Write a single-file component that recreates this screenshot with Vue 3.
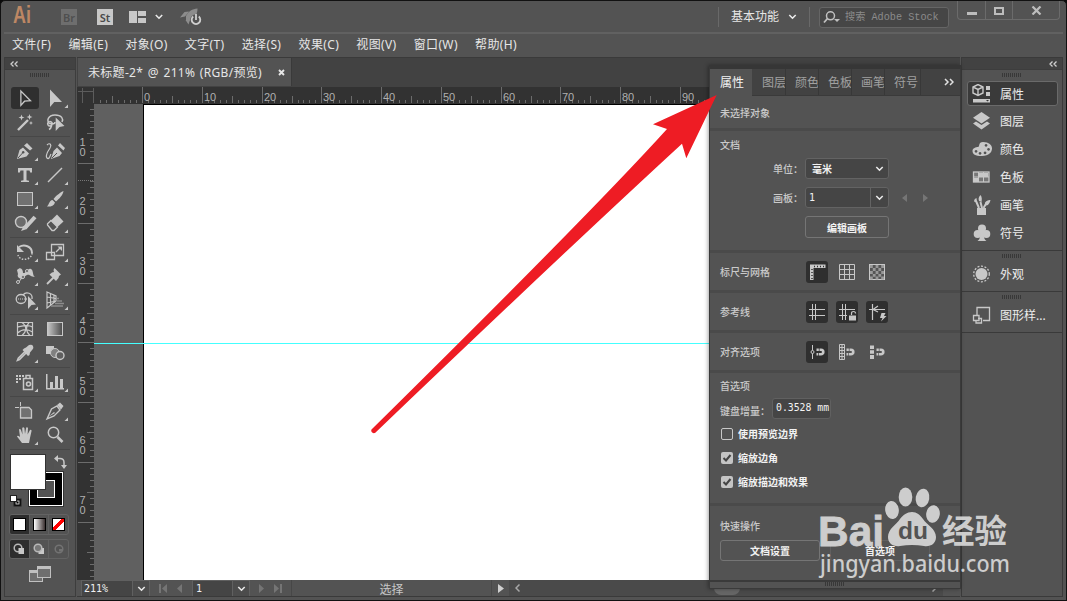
<template>
  <div class="window">
    <header class="app-bar">
      <svg class="logo" width="24" height="28">
        <text x="1" y="20" textLength="18" lengthAdjust="spacingAndGlyphs">Ai</text>
      </svg>
      <span class="app-badge dim">Br</span>
      <span class="app-badge">St</span>
      <svg class="layout-icon" width="17" height="12" viewBox="0 0 17 12">
        <path d="M0 0h8v12H0zM9 0h8v5H9zM9 7h8v5H9z" />
      </svg>
      <svg class="chev" width="8" height="6" viewBox="0 0 8 6"><path d="M.8 1 4 4.2 7.2 1" /></svg>
      <svg class="rocket" width="22" height="18" viewBox="0 0 22 18">
        <path d="M17.500.5C12 1 9 3 6 8v4l5 1c4-3 6.500-7 6.500-12.500zM9 3.500 4.500 4 0 9.500l5-1zM5.500 12l3 4.500L10 12z" fill="#8c8c8c" />
        <circle cx="16" cy="12" r="5.800" fill="#535353" />
        <path d="M13.200 8.500a4.300 4.300 0 1 0 5.600 0M16 6v6" fill="none" stroke="#cfcfcf" stroke-width="1.800" />
      </svg>

      <div class="app-right">
        <span class="v-line"></span>
        <span class="workspace-name">基本功能</span>
        <svg class="chev" width="9" height="6" viewBox="0 0 8 6"><path d="M.8 1 4 4.2 7.2 1" /></svg>
        <span class="v-line second"></span>
        <div class="search">
          <svg width="17" height="14" viewBox="0 0 17 14">
            <circle cx="7.500" cy="4.800" r="4" fill="none" stroke="#c0c0c0" stroke-width="1.500" />
            <path d="M4.500 7.500 1 11.500" stroke="#c0c0c0" stroke-width="1.800" />
            <path d="M11 8h6l-3 3z" fill="#c0c0c0" />
          </svg>
          <span>搜索 Adobe Stock</span>
        </div>
        <div class="win-buttons">
          <span class="win-min"><i></i></span>
          <span class="win-max"><i></i></span>
          <span class="win-close">
            <svg width="11" height="9" viewBox="0 0 11 9"><path d="M1.500.5l8 8M9.500.5l-8 8" stroke="#bdbdbd" stroke-width="2.200" /></svg>
          </span>
        </div>
      </div>
    </header>

    <nav class="menu-bar">
      <span v-for="item in menus" :key="item">{{ item }}</span>
    </nav>

    <div class="workspace">
      <aside class="toolbar">
        <div class="dock-head left"><svg width="8" height="6" viewBox="0 0 8 6"><path d="M3.500.5 1 3l2.500 2.500M7.500.5 5 3l2.500 2.500" /></svg></div>
        <div class="grip"></div>
        <div v-for="(group, g) in toolGroups" :key="g" class="tool-group">
          <span v-for="tool in group" :key="tool.name" class="tool" :class="{ active: tool.name === 'select' }">
            <svg width="30" height="24" viewBox="-15 -12 30 24">
              <g v-html="tool.art"></g>
              <path v-if="tool.more" d="M13 6.500v3.500H9.500z" />
            </svg>
          </span>
        </div>
        <div class="swatches">
          <svg width="60" height="60" viewBox="0 0 60 60">
            <rect x="18.500" y="22.500" width="35" height="35" fill="#000" stroke="#333" />
            <rect x="19.500" y="23.500" width="33" height="33" fill="#000" stroke="#fff" />
            <rect x="27.500" y="31.500" width="17" height="17" fill="#535353" stroke="#fff" />
            <rect x=".5" y="5.500" width="35" height="35" fill="#fff" stroke="#333" />
            <path d="M47 9.500h3q4 0 4 4v4" fill="none" stroke="#c8c8c8" stroke-width="1.500" />
            <path d="M44 9.500l4-3.500v7zM54 20l-3-4h6z" fill="#c8c8c8" />
            <rect x="4" y="50" width="7" height="7" fill="#000" stroke="#222" />
            <rect x="6" y="52" width="3" height="3" fill="none" stroke="#c8c8c8" />
            <rect x=".5" y="46.500" width="6" height="6" fill="#fff" stroke="#222" />
          </svg>
        </div>
        <div class="cell-row">
          <span class="cell on"><i class="paint white"></i></span>
          <span class="cell"><i class="paint grad"></i></span>
          <span class="cell"><i class="paint none"></i></span>
        </div>
        <div class="cell-row modes">
          <span class="cell on"><svg width="12" height="12" viewBox="0 0 12 12"><circle cx="5" cy="5" r="3.800" fill="none" stroke="#b8b8b8" stroke-width="1.500" /><path d="M5.500 5H11v6H5.500z" fill="#c8c8c8" /></svg></span>
          <span class="cell"><svg width="12" height="12" viewBox="0 0 12 12"><path d="M5.500 5H11v6H5.500z" fill="#c8c8c8" /><circle cx="5" cy="5" r="3.800" fill="#777" stroke="#b8b8b8" stroke-width="1.500" /></svg></span>
          <span class="cell"><svg width="12" height="12" viewBox="0 0 12 12"><circle cx="6" cy="6" r="3.800" fill="none" stroke="#737373" stroke-width="1.500" /><path d="M6 6h3v2.500H6z" fill="#737373" /></svg></span>
        </div>
        <svg class="screen-mode" width="22" height="16" viewBox="0 0 22 16">
          <rect x=".5" y="4.500" width="13" height="11" fill="#6f6f6f" stroke="#c0c0c0" />
          <path d="M0 4h14v3H0z" fill="#c0c0c0" />
          <rect x="8.500" y=".5" width="13" height="11" fill="#6f6f6f" stroke="#c0c0c0" />
          <path d="M8 0h14v3H8z" fill="#c0c0c0" />
        </svg>
      </aside>

      <main class="document">
        <div class="tab-bar">
          <div class="doc-tab">
            <span>未标题-2* @ 211% (RGB/预览)</span>
            <svg width="7" height="7" viewBox="0 0 7 7"><path d="M1 1l5 5M6 1 1 6" stroke="#e6e6e6" stroke-width="1.900" /></svg>
          </div>
        </div>
        <svg class="ruler-top" width="883" height="17" viewBox="77 87 883 17">
          <path d="M82.500 88v15M78 91.500h15M93.500 88v15" stroke="#5c5c5c" />
          <path :d="topTicks" stroke="#6c6c6c" />
          <text v-for="t in topLabels" :key="t.n" :x="t.x" y="101">{{ t.n }}</text>
        </svg>
        <div class="canvas-row">
          <svg class="ruler-left" width="17" height="476" viewBox="77 104 17 476">
            <path :d="leftTicks" stroke="#6c6c6c" />
            <path d="M78 180.500h16" stroke="#777" stroke-dasharray="1 1" />
            <template v-for="t in leftLabels" :key="t.n">
              <text x="79.500" :y="t.y">{{ t.n[0] }}</text>
              <text x="79.500" :y="t.y + 10">{{ t.n[1] }}</text>
            </template>
          </svg>
          <div class="canvas">
            <div class="artboard"></div>
            <div class="guide"></div>
          </div>
        </div>
        <footer class="status">
          <span class="box zoom-box">211%</span>
          <span class="box chev-box"><svg class="chev" width="9" height="6" viewBox="0 0 8 6"><path d="M.8 1 4 4.200 7.200 1" /></svg></span>
          <svg class="nav-first" width="26" height="9" viewBox="0 0 26 9"><path d="M1 0h2v9H1zM9 0v9L4 4.500zM24 0v9l-5-4.500z" /></svg>
          <span class="box page-box">1</span>
          <span class="box chev-box"><svg class="chev" width="9" height="6" viewBox="0 0 8 6"><path d="M.8 1 4 4.200 7.200 1" /></svg></span>
          <svg class="nav-last" width="26" height="9" viewBox="0 0 26 9"><path d="M1 0v9l5-4.500zM16 0v9l5-4.500zM22 0h2v9h-2z" /></svg>
          <span class="status-text">选择</span>
          <span class="status-arrow"><svg width="6" height="9" viewBox="0 0 6 9"><path d="M0 0v9l6-4.500z" fill="#d0d0d0" /></svg></span>
          <div class="h-scroll">
            <svg width="5" height="8" viewBox="0 0 5 8"><path d="M4.500.5 1 4l3.500 3.500" /></svg>
            <i class="thumb"></i>
            <svg class="next" width="5" height="8" viewBox="0 0 5 8"><path d="M.5.5 4 4 .5 7.500" /></svg>
            <i class="corner"></i>
          </div>
        </footer>

        <section class="props">
          <div class="props-tabs">
            <span v-for="(t, i) in panelTabs" :key="t" :class="{ current: i === 0 }">{{ t }}</span>
            <svg width="10" height="8" viewBox="0 0 10 8"><path d="M1 1l3 3-3 3M6 1l3 3-3 3" /></svg>
          </div>
          <div class="block head"><span class="label">未选择对象</span></div>
          <div class="block doc">
            <span class="label">文档</span>
            <div class="field">
              <span class="label">单位：</span>
              <div class="select"><b>毫米</b><svg class="chev" width="9" height="6" viewBox="0 0 8 6"><path d="M.8 1 4 4.200 7.200 1" /></svg></div>
            </div>
            <div class="field second">
              <span class="label">画板：</span>
              <div class="select split"><span>1</span><em><svg class="chev" width="9" height="6" viewBox="0 0 8 6"><path d="M.8 1 4 4.200 7.200 1" /></svg></em></div>
              <svg class="pager" width="26" height="8" viewBox="0 0 26 8"><path d="M5 0v8L0 4zM21 0v8l5-4z" fill="#757575" /></svg>
            </div>
            <button class="btn edit">编辑画板</button>
          </div>
          <div v-for="row in optionRows" :key="row.label" class="block option">
            <span class="label">{{ row.label }}</span>
            <span v-for="(ic, i) in row.icons" :key="i" class="opt" :class="{ on: ic.on }">
              <svg width="20" height="20" viewBox="-10 -10 20 20" v-html="ic.art"></svg>
            </span>
          </div>
          <div class="block prefs">
            <span class="label">首选项</span>
            <div class="nudge"><span class="label">键盘增量：</span><span class="input">0.3528 mm</span></div>
            <div v-for="c in checks" :key="c.text" class="check">
              <i :class="{ checked: c.on }">
                <svg v-if="c.on" width="12" height="12" viewBox="0 0 12 12"><path d="M2.500 6 5 8.500 9.500 3" fill="none" stroke="#444" stroke-width="2" /></svg>
              </i>
              <b>{{ c.text }}</b>
            </div>
          </div>
          <div class="block quick">
            <span class="label">快速操作</span>
            <div class="quick-buttons">
              <button class="btn">文档设置</button>
              <button class="btn faint">首选项</button>
            </div>
          </div>
          <div class="props-foot"><div class="grip"></div></div>
        </section>
      </main>

      <aside class="dock">
        <div class="dock-head right"><svg width="8" height="6" viewBox="0 0 8 6"><path d="M3.500.5 1 3l2.500 2.500M7.500.5 5 3l2.500 2.500" /></svg></div>
        <div v-for="(group, g) in dockGroups" :key="g" class="dock-group">
          <div class="grip"></div>
          <div v-for="d in group" :key="d.text" class="dock-item" :class="{ active: d.text === '属性' }">
            <svg width="20" height="20" viewBox="-10 -10 20 20" v-html="d.art"></svg>
            <span>{{ d.text }}</span>
          </div>
        </div>
      </aside>
    </div>

    <!-- pointer arrow towards the properties tab -->
    <svg class="overlay" width="1067" height="601" viewBox="0 0 1067 601">
      <path d="M716.700 95 653 124.300 667 129Q590 214 371.500 429.500A2.600 2.600 0 0 0 375.300 432.700Q560 256 682 143.700L686.300 158.300Z" fill="#ee1c24" />
    </svg>

    <svg class="overlay mark" width="1067" height="601" viewBox="0 0 1067 601">
      <text class="mark-bai" x="818" y="546" textLength="66" lengthAdjust="spacingAndGlyphs">Bai</text>
      <ellipse cx="892" cy="510" rx="6.800" ry="9" transform="rotate(-8 892 510)" />
      <ellipse cx="905.500" cy="497" rx="6.800" ry="9.500" />
      <ellipse cx="922.500" cy="498" rx="6.800" ry="9.300" transform="rotate(10 922.500 498)" />
      <ellipse cx="933" cy="514" rx="6.800" ry="8.800" transform="rotate(8 933 514)" />
      <path d="M912 512c5 0 8 3 11 7 4 6 13 10 13 18 0 7-6 10-12 9-8-1.500-16-1.500-24 0-6 1-12-2-12-9 0-8 8-12 12-18 3-4 7-7 12-7z" />
      <text class="mark-du" x="898" y="539" textLength="30" lengthAdjust="spacingAndGlyphs">du</text>
      <text class="mark-cn" x="942" y="543" textLength="65" lengthAdjust="spacingAndGlyphs">经验</text>
      <text class="mark-url" x="820" y="572" textLength="190" lengthAdjust="spacingAndGlyphs">jingyan.baidu.com</text>
    </svg>
  </div>
</template>

<script setup>
const menus = ['文件(F)', '编辑(E)', '对象(O)', '文字(T)', '选择(S)', '效果(C)', '视图(V)', '窗口(W)', '帮助(H)']
const panelTabs = ['属性', '图层', '颜色', '色板', '画笔', '符号']

const line = 'fill="none" stroke="#c8c8c8"'

const toolGroups = [
  [
    { name: 'select', art: `<path d="M-4.500-7.500V8L-.5 3.500 6 3z" ${line} stroke-width="1.400"/>` },
    { name: 'direct', more: true, art: '<path d="M-5-8.500V9L-.7 4H7z"/>' },
    { name: 'wand', art: `<path d="M-7 8 3-2" ${line} stroke-width="2.400"/><path d="M-3.500-7.500l.8 2.200 2.200.8-2.200.8-.8 2.200-.8-2.200-2.200-.8 2.200-.8zM4.500-8l.8 2.200 2.200.8-2.200.8L4.500-2l-.8-2.200-2.200-.8 2.200-.8zM6-1l.6 1.400 1.400.6-1.400.6L6 3l-.6-1.400L4 1l1.400-.6z"/>` },
    { name: 'lasso', art: `<path d="M-5 2C-9-1-7-7 0-7S8.500-3 7 0M-5-.5a2.300 2.300 0 1 1-.1 0M-5 1.500q2 0 1.500 2.500T-6 7.500M-3 2Q0 2 0 0" ${line} stroke-width="1.500"/><path d="M.7-4.500V9L4.500 5l5-1z"/>` }
  ],
  [
    { name: 'pen', more: true, art: '<path d="M-8 8l2.500-9L-2-3.500 4 2.500 1.500 5.500zM-1-5.500 2-8l5.500 5.500L5-.5z"/><path d="M-7 7-2 1.500" stroke="#535353"/><circle cx="-1.800" cy="1.200" r="1.200" fill="#535353"/>' },
    { name: 'curvature', art: `<path d="M-4 8l2.500-8L2-3.500 7 2 4.500 5zM3-5.500 5-8l5 5L8.500-.5z"/><path d="M-3 7 2 2" stroke="#535353"/><path d="M-8-6c3-3 5 0 3 3s-5 8-3 10 3-2 4-4" ${line} stroke-width="1.200"/>` },
    { name: 'type', more: true, art: '<path d="M-7-7H7v4.500H5.200L4.500-4.500H1.500v9.700l2.500.6V7h-8V5.800l2.500-.6v-9.700h-3l-.7 2H-7z"/>' },
    { name: 'line', more: true, art: `<path d="M-7 7 7-7" ${line} stroke-width="1.500"/>` },
    { name: 'rect', more: true, art: '<rect x="-7.500" y="-6.500" width="15" height="13" fill="#717171" stroke="#c8c8c8"/>' },
    { name: 'brush', more: true, art: '<path d="M8.500-8C4-6 0-2-1.500 0L1 2.500C4 0 8-4 8.500-8zM-2.500 1 0 3.500C-1 7-5 8-8 7.500c2-1.500 2-6 5.500-6.500z"/>' },
    { name: 'shaper', more: true, art: `<circle cx="-4" cy="-1" r="5.500" fill="#6c6c6c" stroke="#c8c8c8" stroke-width="1.400"/><path d="M10-6 0 5" ${line} stroke-width="4"/><path d="M-1.500 3 2 6-4 8z"/>` },
    { name: 'eraser', more: true, art: `<path d="M2-8.500 8.500-1.500 2.500 4-4-2.500z"/><path d="M-4-2.500 2.500 4-1 7.500H-3L-7.500 2V.8z" ${line} stroke-width="1.300"/>` }
  ],
  [
    { name: 'rotate', more: true, art: `<path d="M-6-5C-1-8 7-6 7 1" ${line} stroke-width="2"/><path d="M7 1C7 8-5 10-7 3" ${line} stroke-width="1.500" stroke-dasharray="1.500 1.500"/><path d="M-8-7v7h7z"/>` },
    { name: 'scale', more: true, art: `<path d="M-3.500-7.500h12v11h-12zM-8.500.5h8v7h-8zM1 0 5-4" ${line} stroke-width="1.300"/><path d="M2.500-5.500h4.500V-1z"/>` },
    { name: 'width', more: true, art: `<path d="M-8-6c4-4 6 0 6 3 3 1 5-6 8-4s1 6 4 8c-5 0-5-3-8-2s-3 5-6 4-4-3-3-5z"/><path d="M-7 7 2-5" ${line}/><circle cx="-7" cy="6" r="1.500" fill="#535353" stroke="#c8c8c8"/><circle cx="-2" cy="1" r="1.500" fill="#535353" stroke="#c8c8c8"/><circle cx="2" cy="-5" r="1.500" fill="#535353" stroke="#c8c8c8"/>` },
    { name: 'puppet', more: true, art: `<path d="M-.5-8 6-1.500 4 0 3.500 2 1 5l-6.500-6.500L-3-3.500l2-.5L-1.500-6z"/><path d="M-1.500 1.500-8 8" ${line} stroke-width="1.800"/>` },
    { name: 'builder', more: true, art: `<ellipse cx="-4" cy="-1" rx="4.800" ry="4.500" ${line} stroke-width="1.300"/><path d="M-2-5C1-9 8-7 7-1" ${line} stroke-width="1.300"/><path d="M-7-1h10" stroke="#c8c8c8" stroke-dasharray="1 1"/><path d="M3-4v13l3.500-4 4.500-.5z"/>` },
    { name: 'perspective', more: true, art: `<path d="M-8-8 1-4v5l-9 7zM-4.500-6.500v12M-1-5v8M-8-3 1-1.500M-8 3 1 1" ${line} stroke-width="1.200"/><path d="M2-1.500h2M2 1h5M0 3.500h9M-4 6h12" stroke="#8c8c8c" stroke-width="1.500"/>` }
  ],
  [
    { name: 'mesh', art: `<path d="M-7.500-6.500h15v13h-15zM-3-6.500C2-3 2 2-3 6.500M4-6.500C0-2 1 3 5 6.500M-7.500-2C-3-3 3-5 7.500-2M-7.500 4C-2-1 3 0 7.500 3" ${line} stroke-width="1.200"/>` },
    { name: 'gradient', art: '<defs><linearGradient id="toolGrad"><stop offset="0" stop-color="#c8c8c8"/><stop offset="1" stop-color="#4a4a4a"/></linearGradient></defs><rect x="-7.500" y="-6.500" width="15" height="13" fill="url(#toolGrad)" stroke="#c8c8c8"/>' },
    { name: 'eyedropper', more: true, art: `<path d="M2-1-5.500 6.500l-2 .8.800-2L1-2.500" ${line} stroke-width="1.600"/><path d="M-1-4.500 1-5.500l3-2.500q3-1 4 1t-.5 3.500L5-.5l-.5 2.500L3 3-2.500-3z"/>` },
    { name: 'blend', art: '<path d="M-9-7h8v8h-8z"/><circle cx="0" cy="0" r="4.500" fill="#808080" stroke="#c8c8c8"/><circle cx="5" cy="2.500" r="4" fill="#606060" stroke="#c8c8c8" stroke-width="1.400"/>' }
  ],
  [
    { name: 'symbol', more: true, art: `<path d="M-1.500-3.500h9v11h-9zM1-6.500h4v3H1z" ${line} stroke-width="1.500"/><circle cx="3.500" cy="2" r="2" ${line} stroke-width="1.600"/><path d="M-9-7h2v2h-2zM-6-7h2v2h-2zM-3-7h2v2h-2zM-9-4h2v2h-2zM-6-4h2v2h-2zM-9-1h2v2h-2z"/>` },
    { name: 'graph', more: true, art: '<path d="M-9-8h1.500V6H9v1.500H-9zM-5 0h3v6h-3zM0-6h3V6H0zM5-3h3v9H5z"/>' }
  ],
  [
    { name: 'artboard', art: '<path d="M-4.500-3.500H4L6.500-1v8h-11z" fill="#717171" stroke="#c8c8c8" stroke-width="1.300"/><path d="M-10-3.500h4M-4.500-9v4" stroke="#c8c8c8"/>' },
    { name: 'slice', more: true, art: `<path d="M-8 8-3.500-2 2-5 5-1-1 5z" ${line} stroke-width="1.400"/><path d="M2-6 5-8.500 8.500-5 6-1.500zM-7 6-1 1l1 1z"/>` },
    { name: 'hand', more: true, art: '<path d="M-3 8-8 1.500q.5-1.500 3 .5L-6-5.500q.5-1.200 1.800 0L-2.500-.5-2.800-7q1-1.300 2.200 0L0-1 1.200-7.500q1.200-.8 1.800.5L2.600-.5 5-5q1.400-.6 1.600.8L5 3 4 8z"/>' },
    { name: 'zoom', art: `<circle cx="-1.500" cy="-2.500" r="5.200" ${line} stroke-width="1.500"/><path d="M2.500 2 7.500 7" ${line} stroke-width="2.600"/>` }
  ]
]

const magnet = '<path d="M-.5-2.300H4a2.300 2.300 0 0 1 0 4.600H-.5" fill="none" stroke="#c8c8c8" stroke-width="2.600" stroke-dasharray="2.300 .7 10.200 .7 3"/>'

const optionRows = [
  {
    label: '标尺与网格',
    icons: [
      { on: true, art: '<path d="M-7-7.500H8.500v3.500H-3.500v12H-7z"/><path d="M-3-5.500H8" stroke="#333" stroke-width="1.500" stroke-dasharray="1 2"/><path d="M-5-3V8" stroke="#333" stroke-width="1.500" stroke-dasharray="1 2"/>' },
      { art: `<path d="M-7.500-7.500h15v15h-15zM-2.500-7.500v15M2.500-7.500v15M-7.500-2.500h15M-7.500 2.500h15" ${line}/>` },
      { art: '<rect x="-7.500" y="-7.500" width="15" height="15" fill="#555" stroke="#c8c8c8"/><path d="M-7-5.500H7M-7 .5H7M-7 6H7" stroke="#999" stroke-width="2.800" stroke-dasharray="2.800"/><path d="M-4.200-2.500H7M-4.200 3.300H7" stroke="#999" stroke-width="2.800" stroke-dasharray="2.800"/>' }
    ]
  },
  {
    label: '参考线',
    icons: [
      { on: true, art: `<path d="M-8-2.500H8M-8 3.500H8M-4.500-8V8M-1.500-8V8" ${line}/>` },
      { on: true, art: `<path d="M-8-2.500H8M-8 3.500H0M-4.500-8V8M-1.500-8V8" ${line}/><path d="M4.500 3V1.500q0-2 2-2t2 2" ${line} stroke-width="1.200"/><path d="M2 3.500h7V8.500H2z"/>` },
      { on: true, art: `<path d="M-8-2.500H8M-4.500-8V8M-4-2.500 1-6M-4-2.500 1 0" ${line} stroke-width="1.200"/><path d="M4.500 1h4L7 4h2.500L4 9.500 5.500 6H3z"/>` }
    ]
  },
  {
    label: '对齐选项',
    icons: [
      { on: true, art: `<path d="M-4.500-7V-1.500M-4.500 1.500V7" ${line}/><circle cx="-4.500" cy="0" r="1.500" ${line}/>${magnet}` },
      { art: `<path d="M-7.500-7.500h5v15h-5zM-5-7.500v15M-7-4.500h4M-7-1.500h4M-7 1.500h4M-7 4.500h4" ${line}/>${magnet}` },
      { art: `<path d="M-7-6.500h4v3.500h-4zM-7-1.700h4v3.500h-4zM-7 3h4v4h-4z"/>${magnet}` }
    ]
  }
]

const checks = [
  { text: '使用预览边界', on: false },
  { text: '缩放边角', on: true },
  { text: '缩放描边和效果', on: true }
]

const dockGroups = [
  [
    { text: '属性', art: `<path d="M-4-9.500 1-7v6l-5 2.500L-9-1v-6zM-9-7l5 2.500L1-7M-4-4.500v6" ${line} stroke-width="1.400"/><path d="M4-8h4v4H4zM4-2h4v4H4zM-9 5H8v3.500H-9z"/><path d="M4 6h3L5.500 7.500z" fill="#333"/>` },
    { text: '图层', art: '<path d="M-.5-9 8-3.200-.5 2.500-9-3.200z"/><path d="M-9 2.500-6 .5-.5 4 5 .5l3 2L-.5 8.500z"/>' },
    { text: '颜色', art: '<path fill-rule="evenodd" d="M1-7c6 0 9 3 9 6.500S7 7 0 7-9.500 5-9.500 2-6-2-4-2-4-7 1-7zM-6 1a1.400 1.400 0 1 0 .1 0zM-2 3a1.400 1.400 0 1 0 .1 0zM3 2.500a1.400 1.400 0 1 0 .1 0zM6.500-1a1.400 1.400 0 1 0 .1 0zM4-5a1.400 1.400 0 1 0 .1 0z"/>' },
    { text: '色板', art: '<rect x="-8.500" y="-5" width="15.500" height="10" fill="#777" stroke="#c8c8c8" stroke-width="1.300"/><path d="M-3-4h4v4h-4zM2-4h4v4H2zM-8 1h4v4h-4z"/><path d="M-3.500-5V5M1.500-5V5M-8.500 0H7" stroke="#c8c8c8"/>' },
    { text: '画笔', art: `<path d="M-5 3h9v7h-9z"/><path d="M-6-4-3 3M-1.500-3 0 3M5-3 1.500 3" ${line} stroke-width="2"/><path d="M-7.500-3c-1-2 0-3 2-4 0 2 1 3 0 4zM-3-4c-1-3 0-4 1.500-6C0-8 0-6-.5-3zM3-1c0-3 3-4 5.500-4C8-3 7 0 4.500.5z"/>` },
    { text: '符号', art: '<circle cx="0" cy="-4.500" r="4"/><circle cx="-4.300" cy="1" r="4"/><circle cx="4.300" cy="1" r="4"/><path d="M-1.500-2h3c0 6 .5 8 3 10h-9c2.500-2 3-4 3-10z"/>' }
  ],
  [
    { text: '外观', art: `<circle cx="-.5" cy="0" r="6"/><circle cx="-.5" cy="0" r="7.800" ${line} stroke-width="1.300" stroke-dasharray="2 1.600"/>` }
  ],
  [
    { text: '图形样...', art: `<path d="M-5 0v-7.500H7.500v13H1M-8.500.5h5.500v5h-5.500z" ${line} stroke-width="1.300"/><path d="M-4 3.500h3.500v4.500H-6V6" ${line} stroke-width="1.300"/>` }
  ]
]

// 10 mm on the page at 211%
const STEP = 59.77

let topTicks = ''
for (let i = -7; i <= 94; i++) {
  const x = Math.floor(142.6 + (i * STEP) / 10) + 0.5
  const y = i % 10 === 0 ? 87 : i % 5 === 0 ? 96 : 100
  topTicks += `M${x} ${y}V103`
}
const topLabels = Array.from({ length: 10 }, (_, i) => ({ n: i * 10, x: Math.floor(142.6 + i * STEP) + 2 }))

let leftTicks = ''
for (let i = 1; i <= 79; i++) {
  const y = Math.floor(103.9 + (i * STEP) / 10) + 0.5
  const x = i % 10 === 0 ? 78 : i % 5 === 0 ? 87 : 90
  leftTicks += `M${x} ${y}H94`
}
const leftLabels = Array.from({ length: 7 }, (_, i) => ({ n: String((i + 1) * 10), y: Math.floor(146 + i * STEP) }))
</script>

<style>
body {
  background: #0a0a0a;
  overflow: hidden;
}
</style>

<style scoped>
.window {
  position: relative;
  display: flex;
  flex-direction: column;
  box-sizing: border-box;
  width: 1067px;
  height: 601px;
  border: 1px solid #111;
  border-radius: 5px 5px 0 0;
  padding: 0 3px 3px;
  background: #535353;
  color: #e6e6e6;
  font-family: "Noto Sans", "Noto Sans CJK SC", sans-serif;
  font-size: 12px;
  overflow: hidden;
}

svg {
  display: block;
  flex: none;
  fill: #c8c8c8;
}

.chev path {
  fill: none;
  stroke: #e8e8e8;
  stroke-width: 1.6;
}

/* top bar */
.app-bar {
  display: flex;
  align-items: center;
  flex: none;
  height: 31px;
  padding-left: 8px;
  border-bottom: 2px solid #616161;
}

.logo text {
  font: bold 23px "Liberation Sans", sans-serif;
  fill: #bd8764;
}

.app-badge {
  width: 16px;
  height: 16px;
  margin-left: 25px;
  background: #c8c8c8;
  color: #4a4a4a;
  font: 600 11px/17px "Noto Sans", sans-serif;
  text-align: center;
}

.app-badge + .app-badge {
  margin-left: 20px;
}

.app-badge.dim {
  background: #6e6e6e;
  color: #4f4f4f;
}

.layout-icon {
  margin-left: 16px;
}

.layout-icon + .chev {
  margin-left: 9px;
}

.rocket {
  margin-left: 17px;
}

.app-right {
  display: flex;
  align-items: center;
  height: 31px;
  margin-left: auto;
}

.v-line {
  width: 1px;
  height: 20px;
  background: #696969;
}

.workspace-name {
  margin: -1px 9px 0 12px;
}

.v-line.second {
  margin: 0 9px 0 12px;
}

.search {
  display: flex;
  align-items: center;
  gap: 5px;
  box-sizing: border-box;
  width: 130px;
  height: 21px;
  margin-top: 2px;
  padding-left: 3px;
  border: 1px solid #656565;
  border-radius: 3px;
  background: #464646;
  color: #8b8b8b;
  font: 10.2px "Liberation Mono", "Noto Sans CJK SC", monospace;
  white-space: nowrap;
}

.search span {
  padding-bottom: 4px;
}

.win-buttons {
  display: flex;
  align-self: flex-start;
  box-sizing: border-box;
  width: 103px;
  height: 19px;
  margin: 0 3px 0 8px;
  border: 1px solid #6b6b6b;
  border-top: 0;
  border-radius: 0 0 4px 4px;
}

.win-buttons span {
  display: flex;
  align-items: center;
  justify-content: center;
  border-left: 1px solid #6b6b6b;
}

.win-buttons .win-min {
  width: 27px;
  border-left: 0;
}

.win-buttons .win-max {
  width: 26px;
}

.win-close {
  flex: 1;
}

.win-min i {
  width: 10px;
  height: 3px;
  margin-top: 6px;
  background: #bdbdbd;
}

.win-max i {
  width: 6px;
  height: 4px;
  margin-top: 2px;
  border: 2px solid #bdbdbd;
}

.menu-bar {
  display: flex;
  align-items: center;
  flex: none;
  gap: 17.2px;
  height: 21px;
  padding: 0 0 2px 8px;
  letter-spacing: 0.36px;
  line-height: 20px;
  white-space: nowrap;
}

.workspace {
  display: flex;
  flex: 1;
  min-height: 0;
}

.dock-head {
  display: flex;
  align-items: center;
  box-sizing: border-box;
  height: 13px;
  border-top: 1px solid #3a3a3a;
  border-bottom: 1px solid #3d3d3d;
  background: #424242;
}

.dock-head.left {
  padding-left: 5px;
}

.dock-head.right {
  justify-content: flex-end;
  padding-right: 5px;
}

.dock-head path {
  fill: none;
  stroke: #d0d0d0;
  stroke-width: 1.3;
}

.grip {
  width: 20px;
  height: 4px;
  margin: 3px auto 0;
  background: repeating-linear-gradient(90deg, #383838 0 1px, #535353 1px 2px);
}

/* tools */
.toolbar {
  box-sizing: border-box;
  width: 72px;
  flex: none;
  border: solid #3d3d3d;
  border-width: 0 1px 1px;
}

.toolbar .grip {
  margin-bottom: 9px;
  margin-left: 25px;
}

.tool-group {
  display: grid;
  grid-template-columns: 30px 30px;
  grid-auto-rows: 24px;
  width: 60px;
  margin-left: 5px;
  padding-bottom: 2px;
  border-bottom: 1px solid #474747;
}

.tool-group + .tool-group {
  padding-top: 2px;
}

.tool.active svg {
  width: 28px;
  height: 22px;
  margin: 1px;
  border-radius: 3px;
  background: #2f2f2f;
}

.swatches {
  margin: -1px 0 0 5px;
}

.cell-row {
  display: flex;
  box-sizing: border-box;
  width: 60px;
  height: 21px;
  margin: 5px 0 0 4px;
  border: 1px solid #636363;
  border-radius: 3px;
  overflow: hidden;
}

.cell-row.modes {
  height: 20px;
  margin-top: 4px;
}

.cell {
  display: flex;
  flex: 1;
  align-items: center;
  justify-content: center;
}

.cell + .cell {
  border-left: 1px solid #606060;
}

.cell.on {
  background: #2e2e2e;
}

.paint {
  width: 11px;
  height: 11px;
  border: 1px solid #000;
}

.paint.white {
  background: #fff;
}

.paint.grad {
  background: linear-gradient(90deg, #fff, #3a3030);
}

.paint.none {
  background: linear-gradient(135deg, #fff 38%, #f00 38% 62%, #fff 62%);
}

.screen-mode {
  margin: 7px 0 0 24px;
}

/* document */
.document {
  position: relative;
  display: flex;
  flex-direction: column;
  width: 883px;
  margin-left: 1px;
  flex: none;
}

.tab-bar {
  box-sizing: border-box;
  height: 30px;
  border-top: 1px solid #3a3a3a;
  background: #424242;
}

.doc-tab {
  display: flex;
  align-items: center;
  box-sizing: border-box;
  width: 214px;
  height: 28px;
  margin-left: 1px;
  padding: 0 6px 0 10px;
  justify-content: space-between;
  border-right: 1px solid #3a3a3a;
  background: #535353;
  letter-spacing: 0.3px;
  word-spacing: 1.2px;
  white-space: nowrap;
}

.ruler-top,
.ruler-left {
  background: #323232;
}

.ruler-top text,
.ruler-left text {
  fill: #b0b0b0;
  font: 11px "Liberation Sans", sans-serif;
}

.ruler-top path,
.ruler-left path {
  fill: none;
}

.canvas-row {
  display: flex;
  flex: 1;
  min-height: 0;
}

.canvas {
  position: relative;
  display: flex;
  flex: 1;
  background: #606060;
}

.artboard {
  flex: 1;
  margin-left: 49px;
  border-top: 1px solid #000;
  border-left: 1px solid #000;
  background: #fff;
}

.guide {
  position: absolute;
  top: 239px;
  left: 0;
  right: 0;
  height: 1px;
  background: #4ff;
}

.status {
  display: flex;
  align-items: center;
  box-sizing: border-box;
  height: 17px;
  border-bottom: 1px solid #3a3a3a;
  padding-left: 4px;
  background: #535353;
  color: #f0f0f0;
}

.status .box {
  display: flex;
  align-items: center;
  box-sizing: border-box;
  height: 16px;
  border: 1px solid #606060;
  border-bottom: 0;
  background: #454545;
  font: 10px "DejaVu Sans Mono", monospace;
}

.zoom-box {
  width: 52px;
  padding-left: 2px;
}

.status .chev-box {
  width: 17px;
  justify-content: center;
  border-left: 0;
  background: #4c4c4c;
}

.page-box {
  width: 41px;
  padding-left: 3px;
}

.nav-first {
  margin: 0 8px;
}

.nav-last {
  margin: 0 7px 0 8px;
}

.nav-first path,
.nav-last path {
  fill: #757575;
}

.status-text {
  width: 199px;
  height: 16px;
  border-left: 1px solid #474747;
  color: #c8c8c8;
  line-height: 20px;
  text-align: center;
}

.status-arrow {
  display: flex;
  align-items: center;
  justify-content: center;
  width: 17px;
  height: 16px;
  border-left: 1px solid #484848;
}

.h-scroll {
  display: flex;
  align-items: center;
  flex: 1;
  height: 16px;
  padding-left: 6px;
  background: #4a4a4a;
}

.h-scroll path {
  fill: none;
  stroke: #a8a8a8;
  stroke-width: 1.5;
}

.thumb {
  width: 26px;
  height: 14px;
  margin-left: 194px;
  border-radius: 7px;
  background: #666;
}

.h-scroll .next {
  margin-left: auto;
}

.corner {
  width: 17px;
  height: 16px;
  margin-left: 6px;
  background: #535353;
}

/* floating properties panel */
.props {
  position: absolute;
  top: 8px;
  left: 632px;
  display: flex;
  flex-direction: column;
  box-sizing: border-box;
  width: 252px;
  height: 524px;
  border: 1px solid #3a3a3a;
  border-top: 4px solid #363636;
  background: #535353;
  box-shadow: -1px 0 4px rgba(0, 0, 0, 0.35);
}

.props-tabs {
  display: flex;
  align-items: center;
  flex: none;
  box-sizing: border-box;
  height: 27px;
  border-bottom: 1px solid #3a3a3a;
  background: #424242;
}

.props-tabs span {
  box-sizing: border-box;
  width: 33px;
  height: 26px;
  padding-left: 9px;
  border-right: 1px solid #383838;
  color: #a0a0a0;
  line-height: 27px;
  white-space: nowrap;
  overflow: hidden;
}

.props-tabs span:nth-child(2) {
  width: 34px;
  padding-left: 10px;
}

.props-tabs span:nth-child(6) {
  width: 36px;
}

.props-tabs .current {
  width: 42px;
  height: 27px;
  margin-bottom: -1px;
  padding-left: 10px;
  border-right: 0;
  background: #535353;
  color: #f4f4f4;
}

.props-tabs svg {
  margin-left: 23px;
}

.props-tabs path {
  fill: none;
  stroke: #e0e0e0;
  stroke-width: 1.5;
}

.block {
  flex: none;
  box-sizing: border-box;
  padding-left: 10px;
  border-bottom: 3px solid #4a4a4a;
  font-size: 10px;
  line-height: 14px;
}

.label {
  display: block;
  color: #cacaca;
  font-weight: 500;
}

.block b {
  color: #f2f2f2;
}

.head {
  height: 35px;
  padding-top: 10px;
}

.doc {
  height: 122px;
  padding-top: 7px;
}

.field {
  display: flex;
  align-items: center;
  height: 21px;
  margin-top: 6px;
  padding-left: 53px;
}

.field.second {
  margin-top: 8px;
}

.field .label {
  width: 32px;
}

.select {
  display: flex;
  align-items: center;
  justify-content: space-between;
  box-sizing: border-box;
  width: 84px;
  height: 21px;
  padding: 0 4px 0 6px;
  border: 1px solid #636363;
  border-radius: 3px;
  background: #454545;
}

.select.split {
  padding: 0 0 0 3px;
  color: #f2f2f2;
  font: 10px "DejaVu Sans Mono", monospace;
}

.select em {
  display: flex;
  align-items: center;
  justify-content: center;
  width: 17px;
  height: 19px;
  border-left: 1px solid #636363;
}

.pager {
  margin-left: 13px;
}

.btn {
  box-sizing: border-box;
  width: 100px;
  height: 21px;
  padding: 0;
  border: 1px solid #757575;
  border-radius: 3px;
  background: none;
  color: #f2f2f2;
  font: bold 10px "Noto Sans", "Noto Sans CJK SC", sans-serif;
}

.btn.edit {
  display: block;
  width: 84px;
  height: 22px;
  margin: 8px 0 0 85px;
}

.btn.faint {
  border-color: #606060;
}

.option {
  display: flex;
  align-items: center;
  height: 40px;
}

.option .label {
  width: 86px;
}

.opt {
  display: flex;
  align-items: center;
  justify-content: center;
  width: 22px;
  height: 22px;
  margin-right: 8px;
  border-radius: 3px;
}

.opt.on {
  background: #2f2f2f;
}

.prefs {
  height: 133px;
  padding-top: 6px;
}

.nudge {
  display: flex;
  align-items: center;
  height: 20px;
  margin: 5px 0 4px;
}

.nudge .label {
  width: 52px;
  padding-top: 5px;
}

.input {
  box-sizing: border-box;
  width: 59px;
  height: 21px;
  padding-left: 3px;
  border: 1px solid #606060;
  border-radius: 3px;
  background: #454545;
  color: #f4f4f4;
  font: 9.8px/18px "DejaVu Sans Mono", monospace;
  white-space: nowrap;
}

.check {
  display: flex;
  align-items: center;
  gap: 5px;
  height: 24px;
}

.check i {
  box-sizing: border-box;
  width: 12px;
  height: 12px;
  margin-left: 1px;
  border: 1px solid #c8c8c8;
  border-radius: 2px;
}

.check i.checked {
  border: 0;
  background: #c4c4c4;
}

.quick {
  flex: 1;
  padding-top: 13px;
  border-bottom: 2px solid #3a3a3a;
}

.quick-buttons {
  display: flex;
  gap: 10px;
  margin-top: 7px;
}

.props-foot {
  height: 6px;
  flex: none;
}

.props-foot .grip {
  margin-top: 0;
}

/* right dock */
.dock {
  box-sizing: border-box;
  width: 102px;
  margin-left: 1px;
  border: solid #3a3a3a;
  border-width: 0 1px 1px 1px;
}

.dock-group {
  padding-bottom: 4px;
  border-bottom: 1px solid #3a3a3a;
}

.dock-group .grip {
  margin-bottom: 3px;
}

.dock-item {
  display: flex;
  align-items: center;
  gap: 8px;
  box-sizing: border-box;
  width: 91px;
  height: 26px;
  margin: 2px 0 0 5px;
  padding-left: 4px;
  border: 1px solid transparent;
  border-radius: 3px;
  color: #ececec;
  white-space: nowrap;
}

.dock-item.active {
  height: 25px;
  margin-top: 4px;
  border-color: #6a6a6a;
  background: #3a3a3a;
}

.overlay {
  position: absolute;
  top: -1px;
  left: -1px;
  pointer-events: none;
}

.mark {
  fill: #d8d8d8;
  opacity: 0.92;
}

.mark-bai {
  font: bold 43px "Liberation Sans", sans-serif;
  stroke: #d8d8d8;
  stroke-width: 0.8;
}

.mark-du {
  fill: #535353;
  font: bold 24px "Liberation Sans", sans-serif;
}

.mark-cn {
  font: bold 33px "Noto Sans CJK SC", sans-serif;
}

.mark-url {
  font: 500 24px "Noto Sans", sans-serif;
}
</style>
